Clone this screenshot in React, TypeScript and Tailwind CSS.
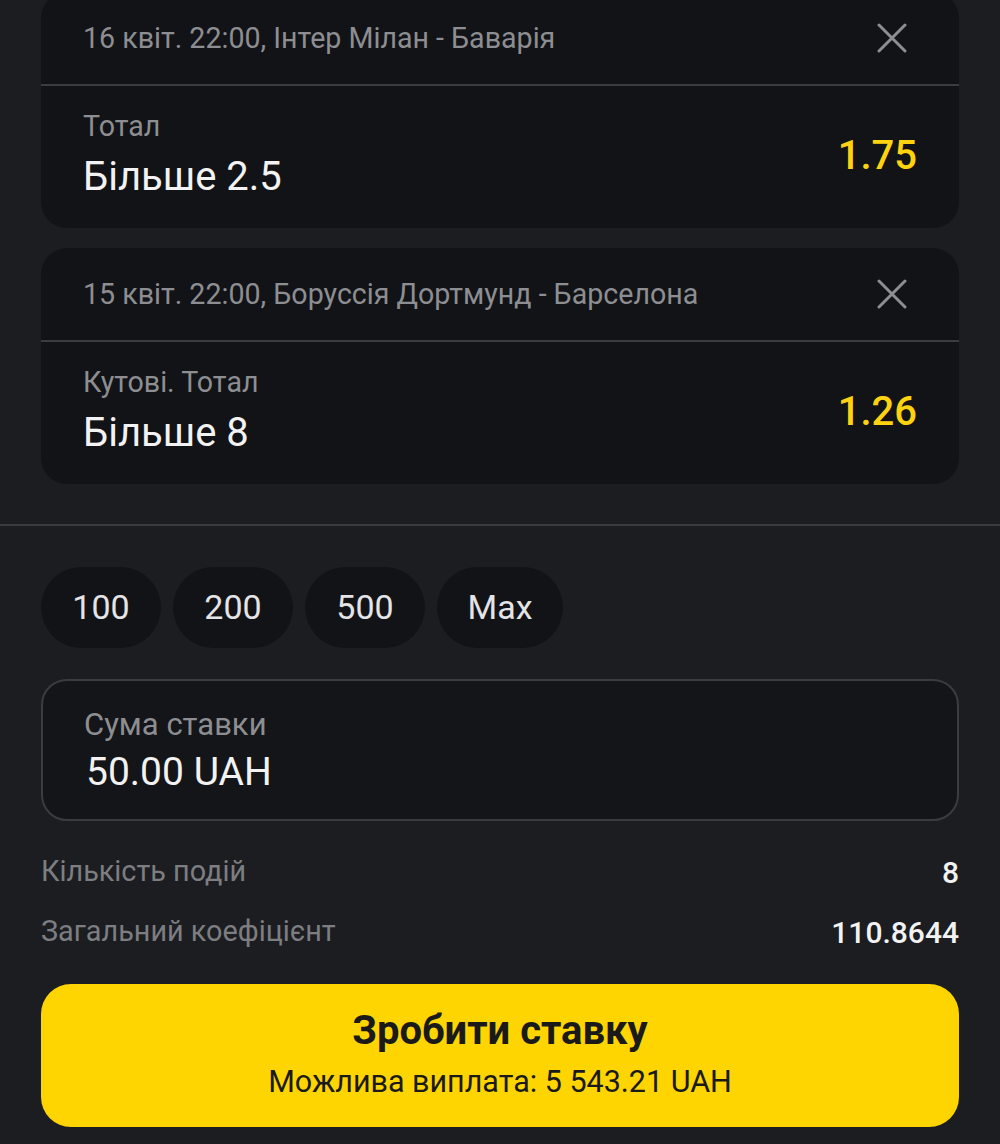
interface Bet {
  header: string;
  market: string;
  pick: string;
  odds: string;
}

const bets: Bet[] = [
  { header: '16 квіт. 22:00, Інтер Мілан - Баварія', market: 'Тотал', pick: 'Більше 2.5', odds: '1.75' },
  { header: '15 квіт. 22:00, Боруссія Дортмунд - Барселона', market: 'Кутові. Тотал', pick: 'Більше 8', odds: '1.26' },
];

function CloseIcon() {
  return (
    <svg width="30" height="30" viewBox="0 0 30 30" fill="none" stroke="#8d8e92" strokeWidth="3" strokeLinecap="round">
      <path d="M2 2l26 26M28 2L2 28" />
    </svg>
  );
}

function BetCard({ bet }: { bet: Bet }) {
  return (
    <div className="rounded-[26px] bg-[#121316]">
      <div className="flex h-[94px] items-center justify-between border-b-2 border-[#3b3c40] pl-[42px] pr-[52px]">
        <span className="text-[28.6px] text-[#8d8e92]">{bet.header}</span>
        <CloseIcon />
      </div>
      <div className="flex h-[142px] items-center justify-between px-[42px]">
        <div className="flex flex-col pb-[8px]">
          <span className="text-[28.6px] leading-[36px] text-[#8d8e92]">{bet.market}</span>
          <span className="mt-[11px] text-[40px] leading-[44px] text-[#f2f2f3]">{bet.pick}</span>
        </div>
        <span className="pb-[2px] text-[40px] font-medium text-[#fdd20f]">{bet.odds}</span>
      </div>
    </div>
  );
}

export default function App() {
  const chips = ['100', '200', '500', 'Max'];
  return (
    <div className="h-[1144px] w-[1000px] overflow-hidden bg-[#1c1d20] font-['Roboto',sans-serif]">
      <div className="-mt-[8px] flex flex-col gap-[20px] px-[41px]">
        {bets.map((b) => (
          <BetCard key={b.header} bet={b} />
        ))}
      </div>

      <div className="mt-[40px] h-[2px] w-full bg-[#3b3c40]" />

      <div className="px-[41px]">
        <div className="mt-[41px] flex gap-[12px]">
          {chips.map((c) => (
            <div
              key={c}
              className={`flex h-[81px] items-center justify-center rounded-full bg-[#121316] text-[34px] text-[#e4e4e6] ${c === 'Max' ? 'w-[126px]' : 'w-[120px]'}`}
            >
              {c}
            </div>
          ))}
        </div>

        <div className="mt-[31px] flex h-[142px] flex-col justify-center rounded-[26px] border-2 border-[#3b3c40] bg-[#141518] pl-[41px]">
          <span className="text-[31px] leading-[36px] text-[#8d8e92]">Сума ставки</span>
          <span className="mt-[7px] pl-[2px] text-[39px] leading-[44px] text-[#f2f2f3]">50.00 UAH</span>
        </div>

        <div className="mt-[33px] flex h-[36px] items-center justify-between text-[28.8px]">
          <span className="text-[#7d7e82]">Кількість подій</span>
          <span className="text-[30px] font-medium text-[#f2f2f3]">8</span>
        </div>
        <div className="mt-[24px] flex h-[36px] items-center justify-between text-[28.8px]">
          <span className="text-[#7d7e82]">Загальний коефіцієнт</span>
          <span className="text-[30px] font-medium text-[#f2f2f3]">110.8644</span>
        </div>

        <div className="mt-[34px] flex h-[143px] flex-col items-center justify-center rounded-[30px] bg-[#fed500] pb-[4px]">
          <span className="text-[40px] font-bold leading-[46px] text-[#1a1a1a]">Зробити ставку</span>
          <span className="mt-[10px] text-[30.5px] leading-[36px] text-[#1a1a1a]">Можлива виплата: 5 543.21 UAH</span>
        </div>
      </div>
    </div>
  );
}
